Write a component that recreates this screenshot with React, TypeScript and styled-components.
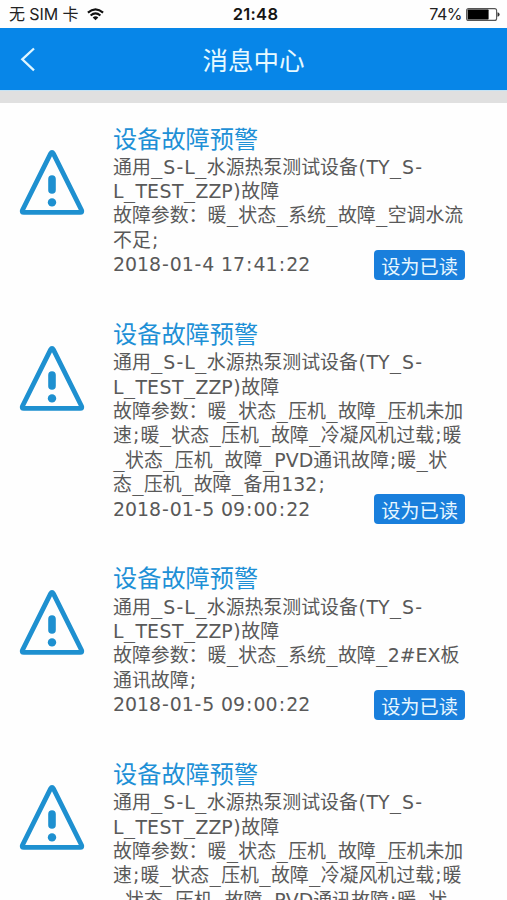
import React from "react";
import styled, { createGlobalStyle } from "styled-components";

const Global = createGlobalStyle`
  * { box-sizing: border-box; }
  html, body { margin: 0; background: #fefefe; overflow: hidden; }
`;

const Screen = styled.div`
  width: 507px;
  height: 900px;
  overflow: hidden;
  background: #fefefe;
  font-family: "DejaVu Sans", "Noto Sans CJK SC", sans-serif;
`;

const StatusBar = styled.div`
  height: 28px;
  padding: 1px 7px 0 9px;
  display: grid;
  grid-template-columns: 1fr auto 1fr;
  align-items: center;
  color: #222;
  font: 17px/27px Inter, "Noto Sans CJK SC", sans-serif;
`;

const Carrier = styled.div`
  display: flex;
  align-items: center;
  gap: 9px;
  font-size: 16px;
  letter-spacing: -0.1px;
`;

const Clock = styled.div`
  font-size: 16.5px;
  font-weight: 600;
  letter-spacing: 0.3px;
  padding-left: 2px;
  color: #151515;
`;

const Power = styled.div`
  display: flex;
  justify-content: flex-end;
  align-items: center;
  gap: 4px;
  font-size: 16px;
  letter-spacing: -0.5px;
`;

const Header = styled.header`
  height: 62px;
  background: #0786e8;
  display: grid;
  grid-template-columns: 60px 1fr 60px;
  align-items: center;
  padding-top: 4px;
`;

const Back = styled.button`
  border: 0;
  padding: 0 0 4px 19px;
  background: none;
  display: flex;
`;

const Title = styled.h1`
  margin: 0;
  text-align: center;
  color: #e6f9ff;
  font-size: 25.5px;
  line-height: 36px;
  font-weight: 400;
`;

const Band = styled.div`
  height: 13px;
  background: #e0e0e0;
  border-top: 1px solid #c5e3f5;
`;

const List = styled.main`
  padding-top: 20.6px;
`;

const Card = styled.article`
  display: grid;
  grid-template-columns: 94px 352px;
  padding: 0 0 42.5px 19px;
`;

const IconCell = styled.div`
  padding-top: 25.4px;
`;

const CardTitle = styled.h2`
  margin: 0;
  height: 31.1px;
  line-height: 32px;
  font-size: 24.2px;
  font-weight: 400;
  color: #1e90d6;
  white-space: nowrap;
`;

const Line = styled.div`
  height: 24.4px;
  line-height: 24.4px;
  font-size: 18.9px;
  font-kerning: none;
  color: #595959;
  white-space: nowrap;
`;

const Glyph = styled.span<{ $extra: number; $mono?: boolean }>`
  padding: 0 ${(p) => p.$extra / 2}px;
  ${(p) => p.$mono && `font-family: "DejaVu Sans Mono", monospace;`}
`;

const Footer = styled.div`
  display: flex;
  justify-content: space-between;
  height: 24.4px;
`;

const ReadButton = styled.button`
  flex: none;
  width: 91px;
  height: 30px;
  margin-top: -2.1px;
  padding: 0;
  border: 0;
  border-radius: 4px;
  background: #197fdc;
  color: #e8f7ff;
  font: 19.2px/32px "Noto Sans CJK SC", sans-serif;
`;

const SPACING: Record<string, number> = {
  _: 0.64,
  "-": 1.75,
  ":": 2.2,
  ";": 2.2,
  S: 0.9,
  "(": 1.2,
  ")": 1.2,
  " ": 0.6,
};

function Spaced({ text }: { text: string }) {
  return (
    <>
      {text.split(/([_\-:;S() ])/).map((part, i) =>
        part in SPACING ? (
          <Glyph key={i} $extra={SPACING[part]} $mono={part === "_"}>
            {part}
          </Glyph>
        ) : (
          part
        ),
      )}
    </>
  );
}

function Warning() {
  return (
    <svg width="67" height="68" viewBox="0 0 67 68" fill="none" stroke="#1e90d0" strokeLinejoin="round" strokeLinecap="round">
      <path d="M31.6 4.6 Q33 2.2 34.4 4.6 L62.6 61.2 Q63.6 63.4 61.2 63.4 H4.8 Q2.4 63.4 3.4 61.2 Z" strokeWidth="4.8" />
      <path d="M33 30 V41" strokeWidth="7.6" />
      <circle cx="33" cy="53.4" r="4.2" fill="#1e90d0" stroke="none" />
    </svg>
  );
}

const device = ["通用_S-L_水源热泵测试设备(TY_S-", "L_TEST_ZZP)故障"];
const compressor = [
  "故障参数：暖_状态_压机_故障_压机未加",
  "速;暖_状态_压机_故障_冷凝风机过载;暖",
  "_状态_压机_故障_PVD通讯故障;暖_状",
  "态_压机_故障_备用132;",
];

const messages = [
  { lines: ["故障参数：暖_状态_系统_故障_空调水流", "不足;"], time: "2018-01-4 17:41:22" },
  { lines: compressor, time: "2018-01-5 09:00:22" },
  { lines: ["故障参数：暖_状态_系统_故障_2#EX板", "通讯故障;"], time: "2018-01-5 09:00:22" },
  { lines: compressor, time: "2018-01-5 09:00:22" },
];

export default function App() {
  return (
    <Screen>
      <Global />
      <StatusBar>
        <Carrier>
          <span>无 SIM 卡</span>
          <svg width="17" height="13" viewBox="0 0 17 13" fill="none" stroke="#111" strokeWidth="2.1">
            <path d="M0.9 4.6 Q8.5 -2 16.1 4.6" />
            <path d="M3.6 7.5 Q8.5 3.3 13.4 7.5" />
            <path d="M8.5 12.2 L5.7 9.4 Q8.5 7.2 11.3 9.4 Z" fill="#111" stroke="none" />
          </svg>
        </Carrier>
        <Clock>21:48</Clock>
        <Power>
          <span>74%</span>
          <svg width="34" height="13" viewBox="0 0 34 13">
            <rect x="0.6" y="0.6" width="30" height="11.8" rx="2" fill="#fff" stroke="#555" strokeWidth="1.1" />
            <rect x="1.6" y="1.6" width="21" height="9.8" rx="0.6" fill="#000" />
            <path d="M31.5 4.3 Q33.6 4.8 33.6 6.5 T31.5 8.7 Z" fill="#333" />
          </svg>
        </Power>
      </StatusBar>
      <Header>
        <Back aria-label="返回">
          <svg width="18" height="26" viewBox="0 0 18 26" fill="none" stroke="#dff6ff" strokeWidth="2.3">
            <path d="M15 2.5 L3.3 13.3 L15 24.3" />
          </svg>
        </Back>
        <Title>消息中心</Title>
      </Header>
      <Band />
      <List>
        {messages.map((m, i) => (
          <Card key={i}>
            <IconCell>
              <Warning />
            </IconCell>
            <div>
              <CardTitle>设备故障预警</CardTitle>
              {[...device, ...m.lines].map((line) => (
                <Line key={line}>
                  <Spaced text={line} />
                </Line>
              ))}
              <Footer>
                <Line>
                  <Spaced text={m.time} />
                </Line>
                <ReadButton>设为已读</ReadButton>
              </Footer>
            </div>
          </Card>
        ))}
      </List>
    </Screen>
  );
}
